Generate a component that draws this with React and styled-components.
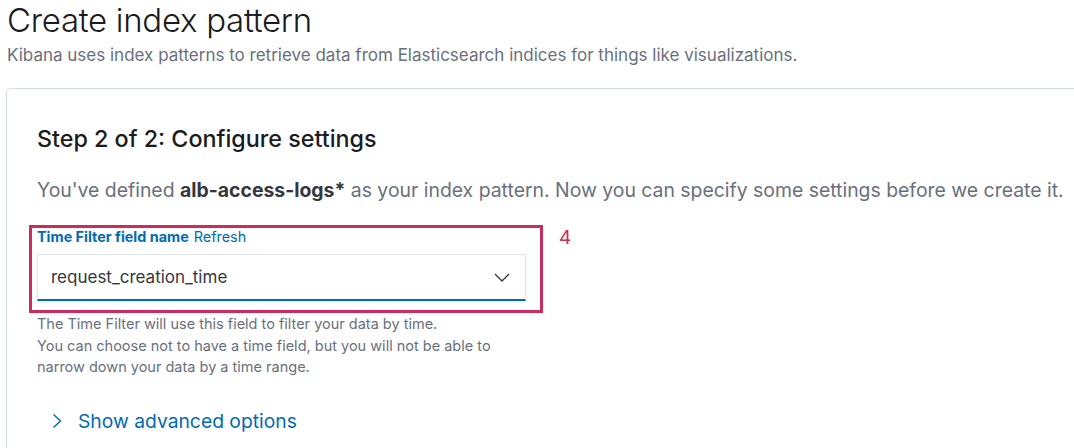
import React from "react";
import styled, { createGlobalStyle } from "styled-components";

const GlobalStyle = createGlobalStyle`
  html, body { margin: 0; padding: 0; background: #ffffff; overflow: hidden; }
  body { font-family: Inter, "Noto Sans", sans-serif; -webkit-font-smoothing: antialiased; }
`;

const Page = styled.div`
  padding-left: 7px;
  width: 1074px;
  height: 448px;
  overflow: hidden;
  box-sizing: border-box;
`;

const Title = styled.h1`
  margin: 0;
  font-size: 33px;
  line-height: 40px;
  font-weight: 300;
  color: #1a1c21;
  letter-spacing: -0.3px;
`;

const Subtitle = styled.p`
  margin: 3px 0 0;
  font-size: 17px;
  line-height: 24px;
  color: #69707d;
`;

const Panel = styled.section`
  margin: 21px 0 0 -1px;
  width: 1100px;
  border: 1px solid #d3dae6;
  border-radius: 5px;
  padding: 34px 0 40px 30px;
  box-sizing: border-box;
`;

const StepTitle = styled.h2`
  margin: 0;
  font-size: 23.3px;
  line-height: 32px;
  font-weight: 500;
  color: #1a1c21;
`;

const Lead = styled.p`
  margin: 21px 0 0;
  font-size: 19.4px;
  line-height: 28px;
  color: #69707d;
  white-space: nowrap;
  strong { color: #343741; font-weight: 700; }
`;

const AnnotatedRow = styled.div`
  display: flex;
  align-items: flex-start;
  gap: 16px;
  margin: 21px 0 0 -8px;
`;

const Highlight = styled.div`
  width: 514px;
  box-sizing: border-box;
  border: 3px solid #cc2b5e;
  padding: 0 14px 9px 5px;
`;

const StepNumber = styled.span`
  font-size: 19px;
  line-height: 24px;
  color: #cc2b5e;
  padding-top: 1px;
`;

const Label = styled.div`
  font-size: 14.4px;
  line-height: 18px;
  color: #006bb4;
  display: flex;
  gap: 5px;
`;

const LabelStrong = styled.span`
  font-weight: 700;
`;

const LabelLink = styled.span`
  font-weight: 400;
`;

const Select = styled.div`
  margin-top: 8px;
  height: 47px;
  box-sizing: border-box;
  border: 1px solid #e1e4e9;
  border-bottom: 2px solid #006bb4;
  background: #ffffff;
  box-shadow: 0 2px 3px rgba(0, 0, 0, 0.06);
  display: flex;
  align-items: center;
  justify-content: space-between;
  padding: 0 15px 0 13px;
  font-size: 17px;
  color: #343741;
`;

const Help = styled.div`
  font-size: 14.5px;
  line-height: 21.5px;
  color: #69707d;
`;

const AdvancedToggle = styled.div`
  margin: 29px 0 0 15px;
  display: flex;
  align-items: center;
  gap: 16px;
  font-size: 19.3px;
  line-height: 28px;
  color: #006bb4;
`;

function ChevronDown() {
  return (
    <svg width="16" height="9" viewBox="0 0 16 9" fill="none">
      <path d="M1 1l7 7 7-7" stroke="#343741" strokeWidth="1.3" />
    </svg>
  );
}

function ChevronRight() {
  return (
    <svg width="10" height="16" viewBox="0 0 10 16" fill="none">
      <path d="M1.5 1.5l7 6.5-7 6.5" stroke="#006bb4" strokeWidth="1.4" />
    </svg>
  );
}

export default function App() {
  return (
    <>
      <GlobalStyle />
      <Page>
        <Title>Create index pattern</Title>
        <Subtitle>
          Kibana uses index patterns to retrieve data from Elasticsearch indices for things like visualizations.
        </Subtitle>
        <Panel>
          <StepTitle>Step 2 of 2: Configure settings</StepTitle>
          <Lead>
            You've defined <strong>alb-access-logs*</strong> as your index pattern. Now you can specify some settings before we create it.
          </Lead>
          <AnnotatedRow>
            <Highlight>
              <Label>
                <LabelStrong>Time Filter field name</LabelStrong>
                <LabelLink>Refresh</LabelLink>
              </Label>
              <Select>
                <span>request_creation_time</span>
                <ChevronDown />
              </Select>
            </Highlight>
            <StepNumber>4</StepNumber>
          </AnnotatedRow>
          <Help>
            The Time Filter will use this field to filter your data by time.
            <br />
            You can choose not to have a time field, but you will not be able to
            <br />
            narrow down your data by a time range.
          </Help>
          <AdvancedToggle>
            <ChevronRight />
            <span>Show advanced options</span>
          </AdvancedToggle>
        </Panel>
      </Page>
    </>
  );
}
